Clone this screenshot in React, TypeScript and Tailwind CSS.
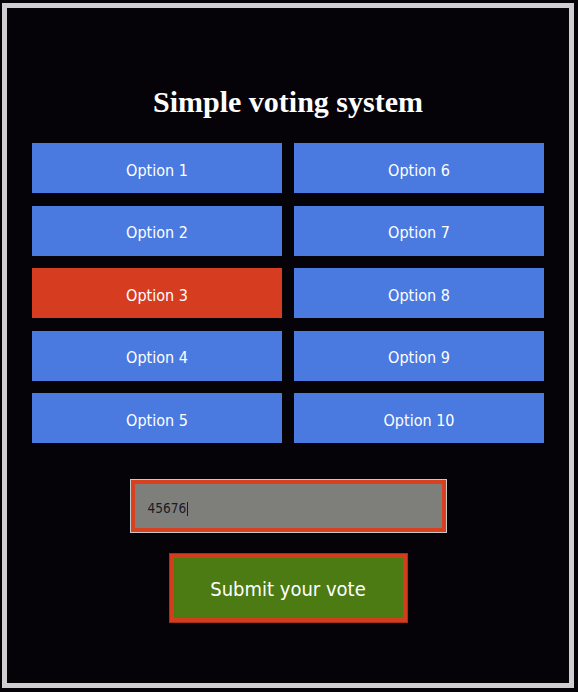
import React from "react";

const options = [1, 6, 2, 7, 3, 8, 4, 9, 5, 10];

export default function App() {
  return (
    <div className="min-h-[692px] w-[578px] bg-[#050308] pl-[2px] pt-[3px]">
      <div className="flex h-[685px] w-[572px] flex-col items-center border-[5px] border-[#cfcfcf] bg-[#050308] pt-[77px]">
        <h1
          className="text-center text-[30px] font-bold leading-[34px] text-white"
          style={{ fontFamily: '"Liberation Serif", "Times New Roman", serif' }}
        >
          Simple voting system
        </h1>
        <div
          className="mt-[24px] grid w-[512px] grid-cols-2 gap-x-3 gap-y-[12.5px]"
          style={{ fontFamily: '"DejaVu Sans Condensed", "Noto Sans", sans-serif' }}
        >
          {options.map((n) => (
            <div
              key={n}
              className={`flex h-[50px] items-center justify-center pt-[5px] text-[16px] text-white ${
                n === 3 ? "bg-[#d63c20]" : "bg-[#4a7ae0]"
              }`}
            >
              Option {n}
            </div>
          ))}
        </div>
        <div className="mt-[36px] h-[54px] w-[317px] border border-[#c8c8c8]">
          <div
            className="flex h-full items-center border-[4px] border-[#d8411f] bg-[#7e7f7a] pl-[13px] pt-[5px] text-[13.5px] text-[#1a1a28]"
            style={{ fontFamily: '"DejaVu Sans Condensed", "Noto Sans", sans-serif' }}
          >
            <span>45676</span>
            <span className="ml-px inline-block h-[14px] w-px bg-[#1a1a28]" />
          </div>
        </div>
        <div className="mt-[20px] h-[70px] w-[239px] border border-[#a52f18]">
          <div
            className="flex h-full items-center justify-center border-[4px] border-[#d33d1c] bg-[#4b7b12] pt-[2px] text-[20px] text-white"
            style={{ fontFamily: '"DejaVu Sans Condensed", "Noto Sans", sans-serif' }}
          >
            Submit your vote
          </div>
        </div>
      </div>
    </div>
  );
}
